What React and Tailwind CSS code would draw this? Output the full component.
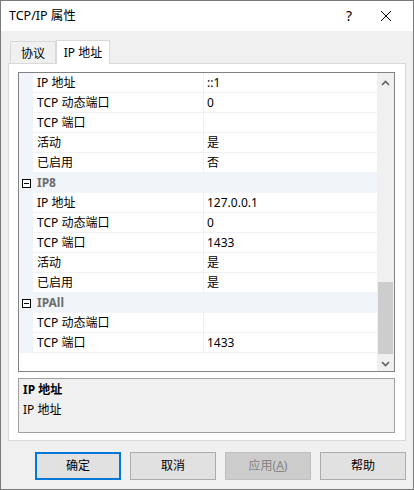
const font = { fontFamily: '"Noto Sans", "Noto Sans CJK SC", sans-serif' }

const rows = [
  { name: 'IP 地址', value: '::1' },
  { name: 'TCP 动态端口', value: '0' },
  { name: 'TCP 端口', value: '' },
  { name: '活动', value: '是' },
  { name: '已启用', value: '否' },
  { cat: 'IP8' },
  { name: 'IP 地址', value: '127.0.0.1' },
  { name: 'TCP 动态端口', value: '0' },
  { name: 'TCP 端口', value: '1433' },
  { name: '活动', value: '是' },
  { name: '已启用', value: '是' },
  { cat: 'IPAll' },
  { name: 'TCP 动态端口', value: '' },
  { name: 'TCP 端口', value: '1433' },
]

function Row({ row }) {
  if (row.cat) {
    return (
      <div className="flex h-[20px] items-center bg-[#f1f4f9]">
        <div className="flex w-[14px] justify-center">
          <div className="flex h-[9px] w-[9px] items-center justify-center border border-black bg-white">
            <div className="h-px w-[5px] bg-black" />
          </div>
        </div>
        <span className="pl-[4px] text-[12px] font-bold leading-none text-[#6d6d6d]">{row.cat}</span>
      </div>
    )
  }
  return (
    <div className="flex h-[20px]">
      <div className="w-[14px] bg-[#f1f4f9]" />
      <div className="flex w-[171px] items-center border-b border-r border-[#eef1f6] pl-[4px] text-[12px] leading-none text-black">
        {row.name}
      </div>
      <div className="flex flex-1 items-center border-b border-[#eef1f6] pl-[3px] text-[12px] leading-none text-black">
        {row.value}
      </div>
    </div>
  )
}

function Button({ children, primary, disabled }) {
  return (
    <div
      className={
        'flex h-[28px] w-[86px] items-center justify-center text-[12px] leading-none ' +
        (primary
          ? 'border-2 border-[#0078d7] bg-[#e1e1e1] text-black'
          : disabled
            ? 'border border-[#bfbfbf] bg-[#cccccc] text-[#838383]'
            : 'border border-[#adadad] bg-[#e1e1e1] text-black')
      }
    >
      {children}
    </div>
  )
}

export default function App() {
  return (
    <div style={font} className="flex h-[490px] w-[414px] flex-col border border-[#7a7a7a] bg-[#f0f0f0]">
      <div className="flex h-[30px] items-center bg-white pl-[8px]">
        <span className="text-[12.5px] leading-none text-black">TCP/IP 属性</span>
        <span className="ml-auto mr-[28px] text-[14px] leading-none text-black">?</span>
        <svg width="12" height="12" viewBox="0 0 12 12" className="mr-[21px]">
          <path d="M1 1L11 11M11 1L1 11" stroke="black" strokeWidth="1" />
        </svg>
      </div>

      <div className="flex flex-col px-[7px] pt-[9px]">
        <div className="flex items-end pl-[2px]">
          <div className="flex h-[22px] w-[46px] items-center justify-center border border-b-0 border-[#d9d9d9] bg-[#f0f0f0] pt-[2px] text-[12px] leading-none">
            协议
          </div>
          <div className="relative z-10 -mb-px flex h-[24px] w-[54px] items-center justify-center border border-b-0 border-[#d9d9d9] bg-white text-[12px] leading-none">
            IP 地址
          </div>
        </div>

        <div className="flex h-[378px] flex-col border border-[#d9d9d9] bg-white pl-[9px] pr-[10px] pt-[8px]">
          <div className="flex h-[300px] border border-[#828282]">
            <div className="flex flex-1 flex-col">
              {rows.map((r, i) => (
                <Row key={i} row={r} />
              ))}
            </div>
            <div className="flex w-[17px] flex-col items-center bg-[#f0f0f0]">
              <svg width="9" height="6" viewBox="0 0 9 6" className="mt-[7px]">
                <path d="M1 5L4.5 1.5L8 5" stroke="#606060" strokeWidth="1.6" fill="none" />
              </svg>
              <div className="mt-[196px] h-[72px] w-[15px] bg-[#cdcdcd]" />
              <svg width="9" height="6" viewBox="0 0 9 6" className="mt-[7px]">
                <path d="M1 1L4.5 4.5L8 1" stroke="#606060" strokeWidth="1.6" fill="none" />
              </svg>
            </div>
          </div>

          <div className="mt-[6px] flex h-[55px] flex-col border border-[#a0a0a0] bg-[#f0f0f0] pl-[4px] pt-[4px]">
            <span className="text-[12px] font-bold leading-[14px] text-black">IP 地址</span>
            <span className="mt-[6px] text-[12px] leading-[14px] text-black">IP 地址</span>
          </div>
        </div>
      </div>

      <div className="mt-[11px] flex justify-end gap-[9px] pr-[7px]">
        <Button primary>确定</Button>
        <Button>取消</Button>
        <Button disabled>
          应用(<span className="underline">A</span>)
        </Button>
        <Button>帮助</Button>
      </div>
    </div>
  )
}
